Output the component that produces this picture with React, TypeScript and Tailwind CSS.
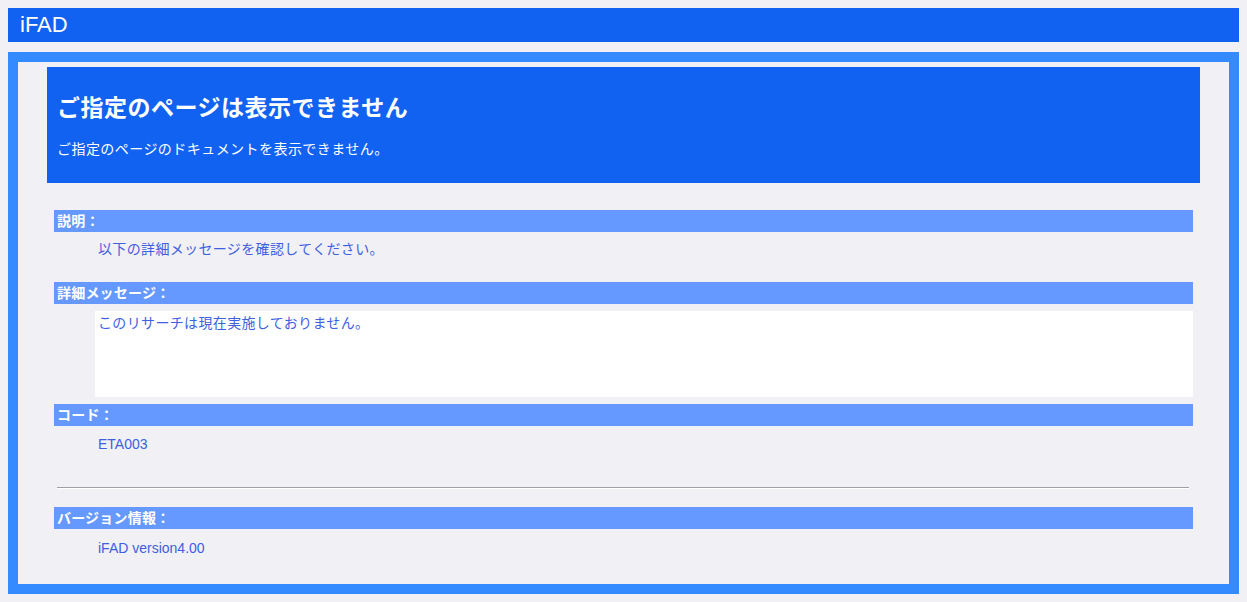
const font = { fontFamily: '"Liberation Sans", "Noto Sans CJK JP", sans-serif' };

function SectionBar({ label }: { label: string }) {
  return (
    <div className="h-[22px] bg-[#6699ff] pl-[3px] text-[14px] font-bold leading-[22px] tracking-[0.2px] text-white">
      {label}
    </div>
  );
}

export default function App() {
  return (
    <div className="min-h-[602px] bg-[#f0f0f5] p-2" style={font}>
      <header className="h-[34px] bg-[#1262f2] pl-3 text-[22px] leading-[34px] text-white">iFAD</header>

      <main className="mt-[10px] h-[542px] border-[10px] border-[#338bff]">
        <section className="mx-[29px] mt-[5px] h-[116px] bg-[#1262f2] px-[10px] pt-[26px] text-white">
          <h1 className="text-[23px] font-bold leading-[30px] tracking-[0.5px]">ご指定のページは表示できません</h1>
          <p className="mt-[16px] text-[14px] leading-[20px] tracking-[0.45px]">ご指定のページのドキュメントを表示できません。</p>
        </section>

        <div className="mx-[36px] mt-[27px] text-[14px] text-[#3f5fdf]">
          <SectionBar label="説明：" />
          <p className="mt-[7px] pl-[44px] leading-[20px] tracking-[0.35px]">以下の詳細メッセージを確認してください。</p>

          <div className="mt-[23px]">
            <SectionBar label="詳細メッセージ：" />
          </div>
          <div className="ml-[41px] mt-[7px] h-[86px] bg-white pl-[3px] pt-[2px] leading-[20px] tracking-[0.35px]">
            このリサーチは現在実施しておりません。
          </div>

          <div className="mt-[7px]">
            <SectionBar label="コード：" />
          </div>
          <p className="mt-[8px] pl-[44px] leading-[20px]">ETA003</p>

          <hr className="ml-[3px] mr-[4px] mt-[33px] h-0 border-t border-b border-t-[#a0a0a0] border-b-white" />

          <div className="mt-[18px]">
            <SectionBar label="バージョン情報：" />
          </div>
          <p className="mt-[9px] pl-[44px] leading-[20px]">iFAD version4.00</p>
        </div>
      </main>
    </div>
  );
}
